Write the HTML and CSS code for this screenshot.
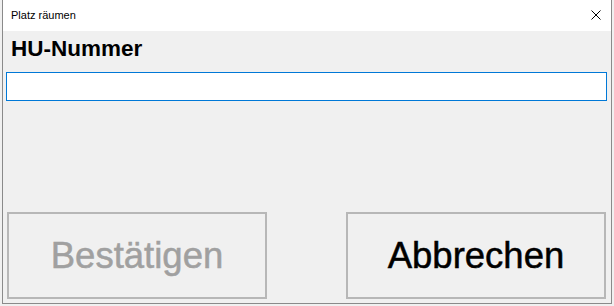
FILE: index.html
```html
<!DOCTYPE html>
<html lang="de">
<head>
<meta charset="utf-8">
<title>Platz räumen</title>
<link rel="stylesheet" href="styles.css">
</head>
<body>
<div class="window">
  <div class="titlebar">
    <span class="title">Platz räumen</span>
    <span class="close" aria-label="Schließen">
      <svg width="10" height="10" viewBox="0 0 10 10"><path d="M0.5 0.5 L9.5 9.5 M9.5 0.5 L0.5 9.5" stroke="#000" stroke-width="1" fill="none"/></svg>
    </span>
  </div>
  <div class="content">
    <div class="label">HU-Nummer</div>
    <input class="field" type="text">
    <div class="buttons">
      <button class="btn disabled">Bestätigen</button>
      <button class="btn">Abbrechen</button>
    </div>
  </div>
</div>
</body>
</html>
```
FILE: styles.css
```css
html, body {
  margin: 0;
  padding: 0;
}
body {
  width: 614px;
  height: 306px;
  background: #f0f0f0;
  overflow: hidden;
}
.window {
  margin-left: 2px;
  width: 608px;
  height: 303px;
  border: 1px solid #8a8a8a;
  border-top: none;
  display: flex;
  flex-direction: column;
  background: #f0f0f0;
}
.titlebar {
  height: 31px;
  background: #ffffff;
  display: flex;
  align-items: center;
  justify-content: space-between;
  padding: 0 10px 0 8px;
  flex: none;
}
.title {
  font-family: "Liberation Sans", Arial, sans-serif;
  font-size: 11px;
  color: #000;
  margin-top: -2px;
}
.close {
  display: flex;
  margin-top: -1px;
}
.content {
  flex: 1;
  display: flex;
  flex-direction: column;
  padding: 0 4px 4px 3px;
}
.label {
  font-family: "Liberation Sans", Arial, sans-serif;
  font-weight: bold;
  font-size: 22.5px;
  line-height: 26px;
  margin: 5px 0 0 5px;
  color: #000;
}
.field {
  display: block;
  box-sizing: border-box;
  width: 601px;
  height: 29px;
  margin: 10px 0 0 0;
  border: 1px solid #0078d7;
  background: #fff;
  outline: none;
  padding: 0;
}
.buttons {
  margin-top: auto;
  display: flex;
  justify-content: space-between;
  padding: 0 1px 0 1px;
}
.btn {
  box-sizing: border-box;
  width: 260px;
  height: 87px;
  border: 2px solid #b7b7b7;
  background: #f0f0f0;
  font-family: "Liberation Sans", Arial, sans-serif;
  font-size: 36.5px;
  color: #000;
  -webkit-text-stroke: 0.5px currentColor;
  padding: 0;
}
.btn.disabled {
  color: #a0a0a0;
}
```
